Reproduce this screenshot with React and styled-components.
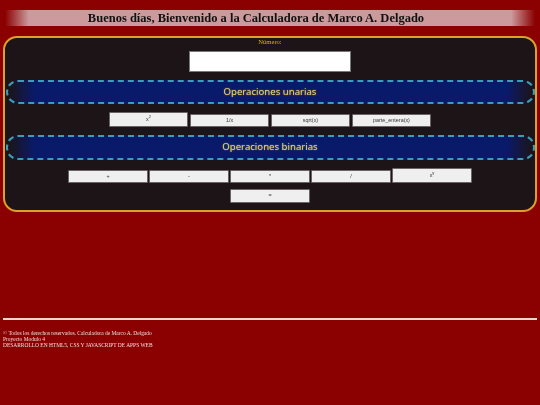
import React from "react";
import styled, { createGlobalStyle } from "styled-components";

const Global = createGlobalStyle`
  html, body { margin: 0; padding: 0; background: #8b0000; }
  body { width: 540px; height: 405px; overflow: hidden; font-family: "Liberation Serif", serif; }
`;
const Page = styled.div`
  padding: 10px 3px 0;
  display: flex;
  flex-direction: column;
  filter: blur(0.3px);
`;
const Title = styled.h1`
  margin: 0 2px;
  padding-right: 28px;
  height: 16px;
  line-height: 16px;
  font-size: 12.5px;
  font-weight: 700;
  text-align: center;
  color: #111;
  background: linear-gradient(to right, #8b0000 0%, #cc9a9d 4.5%, #cc9a9d 95.5%, #8b0000 100%);
`;
const Panel = styled.main`
  margin-top: 10px;
  height: 176px;
  box-sizing: border-box;
  border: 2px solid #dca02c;
  border-radius: 14px;
  background: #1c1416;
  padding: 0 0.5px;
  display: flex;
  flex-direction: column;
  align-items: center;
`;
const Label = styled.label`
  height: 13px;
  line-height: 7px;
  font-size: 6.6px;
  color: #d8b020;
`;
const Field = styled.input`
  display: block;
  box-sizing: border-box;
  width: 162px;
  height: 21px;
  border: 1px solid #777;
  background: #fff;
  padding: 0;
`;
const Banner = styled.h2`
  box-sizing: border-box;
  align-self: stretch;
  margin: ${p => p.$top}px 0 0;
  height: ${p => p.$h}px;
  line-height: 20px;
  border: 2px dashed #3a9dbb;
  border-radius: 12px;
  background: linear-gradient(to right, #1c1416 0%, #0a1a6a 5%, #0a1a6a 95%, #1c1416 100%);
  color: #e6d070;
  font-family: "Noto Sans", sans-serif;
  font-size: 9.6px;
  font-weight: 400;
  text-align: center;
  text-shadow: 0 0 1.5px #a89040;
`;
const Row = styled.div`
  display: flex;
  justify-content: center;
  align-items: flex-end;
  gap: 1.5px;
  margin-top: ${p => p.$top}px;
`;
const Key = styled.button`
  box-sizing: border-box;
  width: 79.5px;
  height: ${p => (p.$tall ? 15 : 13.5)}px;
  padding: 0;
  border: 1px solid #6a6468;
  border-radius: 1px;
  background: #efefef;
  color: #333;
  font-family: "Liberation Sans", sans-serif;
  font-size: 5.4px;
  line-height: 1;
  sup { font-size: 4px; line-height: 0; }
`;
const Rule = styled.hr`
  margin: 106px 0 0;
  height: 2px;
  border: 0;
  background: #e8d5d5;
`;
const Footer = styled.footer`
  margin-top: 10px;
  font-size: 5.44px;
  line-height: 6px;
  color: #f0dcdc;
`;

export default function App() {
  return (
    <Page>
      <Global />
      <Title>Buenos días, Bienvenido a la Calculadora de Marco A. Delgado</Title>
      <Panel>
        <Label htmlFor="n">Número:</Label>
        <Field id="n" />
        <Banner $top={8} $h={24}>Operaciones unarias</Banner>
        <Row $top={8}>
          <Key $tall>x<sup>2</sup></Key>
          <Key>1/x</Key>
          <Key>sqrt(x)</Key>
          <Key>parte_entera(x)</Key>
        </Row>
        <Banner $top={8} $h={25}>Operaciones binarias</Banner>
        <Row $top={8}>
          <Key>+</Key>
          <Key>-</Key>
          <Key>*</Key>
          <Key>/</Key>
          <Key $tall>x<sup>y</sup></Key>
        </Row>
        <Row $top={6}>
          <Key>=</Key>
        </Row>
      </Panel>
      <Rule />
      <Footer>
        © Todos los derechos reservados. Calculadora de Marco A. Delgado<br />
        Proyecto Modulo 4<br />
        DESARROLLO EN HTML5, CSS Y JAVASCRIPT DE APPS WEB
      </Footer>
    </Page>
  );
}
